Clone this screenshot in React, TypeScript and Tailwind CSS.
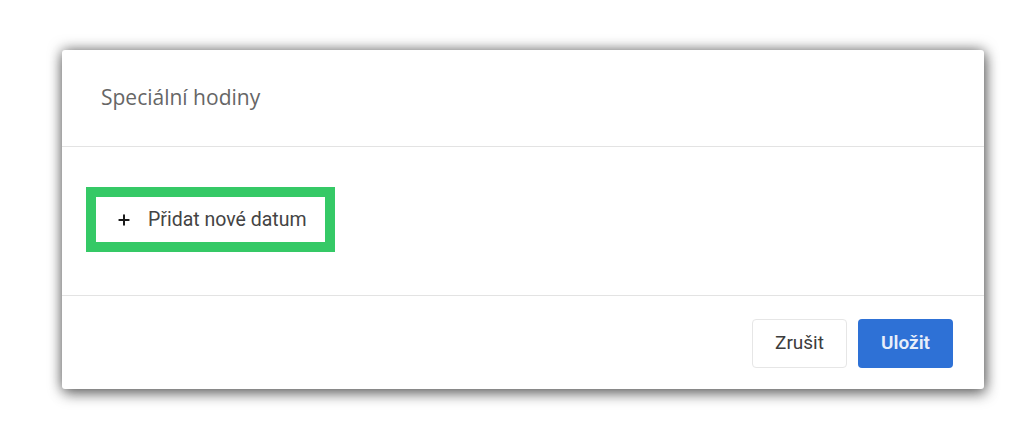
import { Plus } from "lucide-react";

export default function App() {
  return (
    <div className="min-h-[423px] w-[1025px] bg-white pt-[50px] pl-[62px]">
      <div className="w-[922px] rounded-[3px] bg-white shadow-[0_0_14px_rgba(0,0,0,0.55),2px_6px_14px_rgba(0,0,0,0.35)]">
        {/* hlavička */}
        <div className="flex h-[97px] items-center border-b border-[#e3e3e3] pl-[39px] pb-[1px]">
          <h2 className="text-[21px] text-[#666] [font-family:'Open_Sans',sans-serif]">
            Speciální hodiny
          </h2>
        </div>

        {/* obsah */}
        <div className="flex h-[149px] items-start border-b border-[#e3e3e3] pt-[40px] pl-[24px]">
          <div className="border-[10px] border-[#35c966]">
            <button
              type="button"
              className="flex h-[45px] w-[229px] items-center gap-[16px] pl-[20px] text-[19.5px] text-[#444] [font-family:Roboto,sans-serif]"
            >
              <Plus className="h-[16px] w-[16px] text-[#1a1a1a]" strokeWidth={3} />
              <span>Přidat nové datum</span>
            </button>
          </div>
        </div>

        {/* patička */}
        <div className="flex h-[93px] items-center justify-end gap-[11px] pr-[31px] pt-[2px] [font-family:Roboto,sans-serif]">
          <button
            type="button"
            className="h-[49px] w-[95px] rounded-[4px] border border-[#e6e6e6] bg-white text-[19px] text-[#3c3c3c]"
          >
            Zrušit
          </button>
          <button
            type="button"
            className="h-[49px] w-[95px] rounded-[4px] bg-[#2e71d6] text-[19px] font-semibold text-[#e8eefa]"
          >
            Uložit
          </button>
        </div>
      </div>
    </div>
  );
}
